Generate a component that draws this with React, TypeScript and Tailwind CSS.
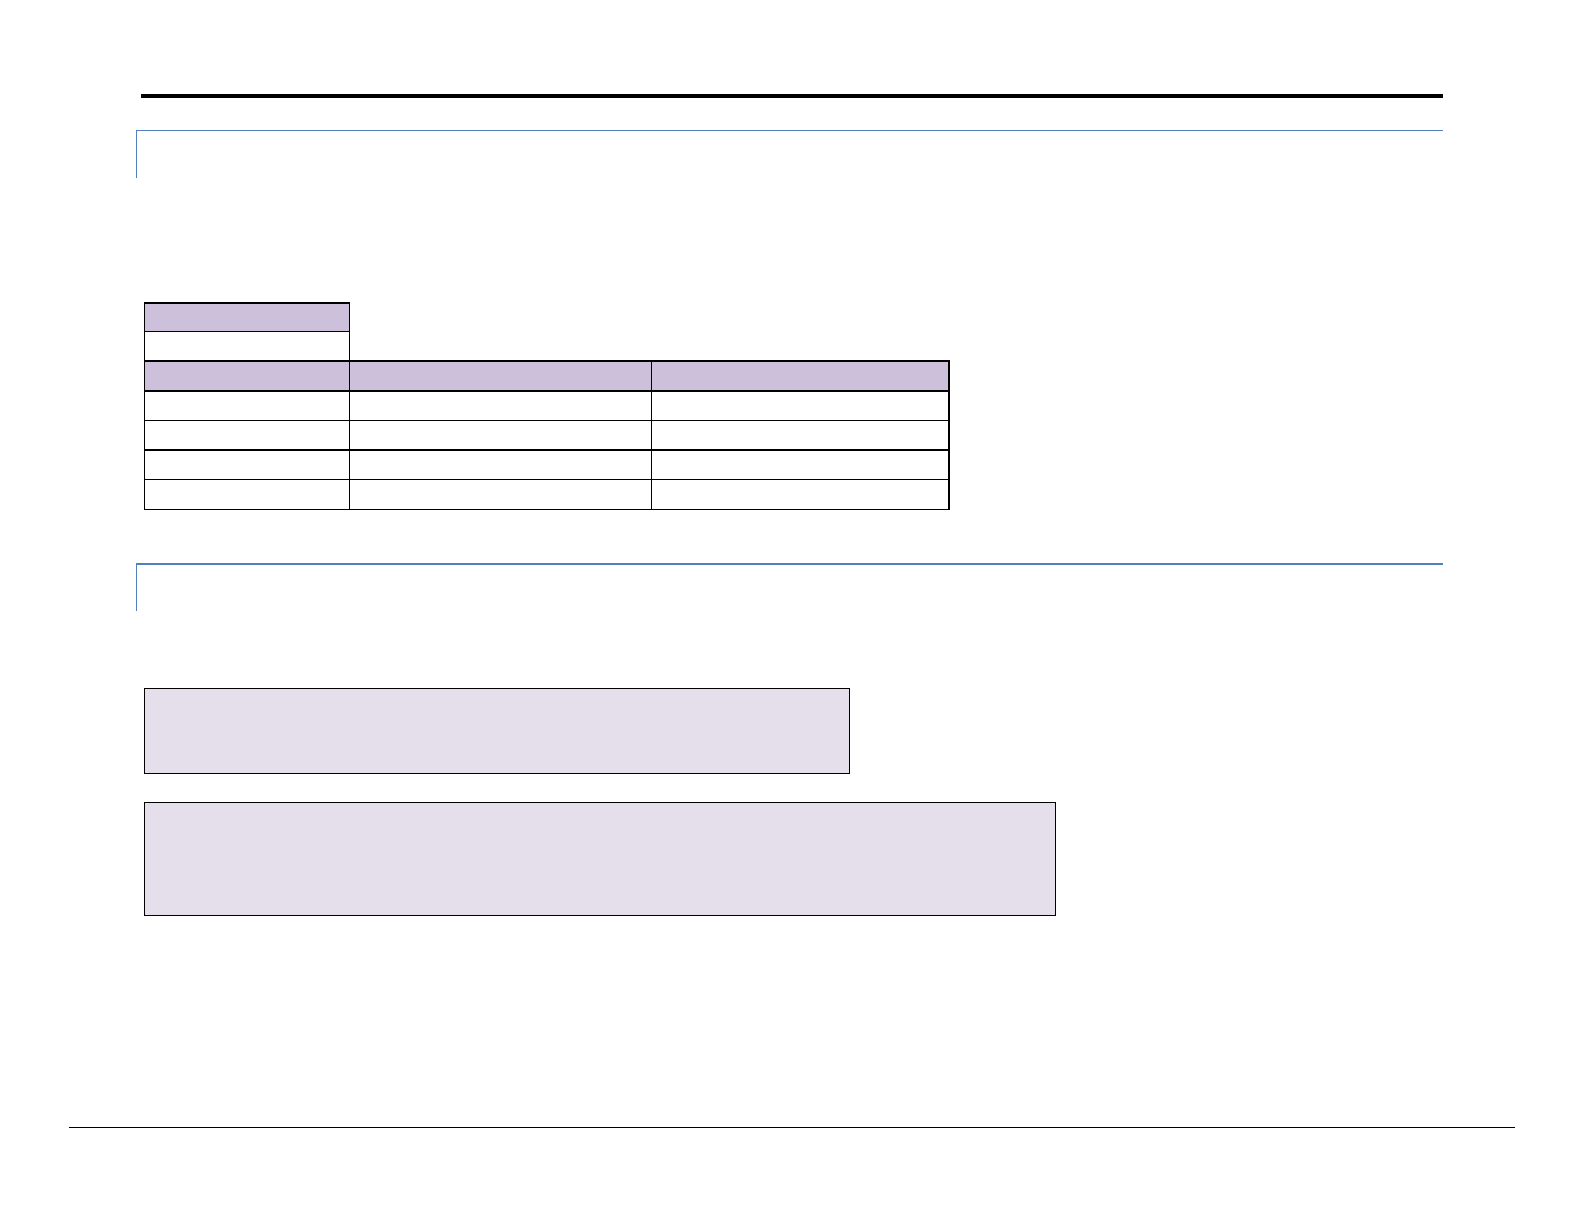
import React from 'react';

const rows = [
    { bg: 'bg-[#ccc0da]', h: 'h-[28px]', border: 'border-b-2' },
    { bg: '', h: 'h-[28px]', border: 'border-b' },
    { bg: '', h: 'h-[28px]', border: 'border-b-2' },
    { bg: '', h: 'h-[28px]', border: 'border-b' },
    { bg: '', h: 'h-[29px]', border: 'border-b' },
];

function SectionHeading({ thick = false }: { thick?: boolean }) {
    return (
        <div
            className={`ml-[136px] h-[48px] w-[1307px] border-l border-[#4f81bd] ${thick ? 'border-t-2' : 'border-t'}`}
        />
    );
}

export default function App() {
    return (
        <div className="flex min-h-[1225px] w-[1585px] flex-col bg-white pt-[94px]">
            {/* top rule */}
            <div className="ml-[141px] h-[4px] w-[1302px] bg-black" />

            <div className="mt-[32px]">
                <SectionHeading />
            </div>

            {/* table */}
            <div className="ml-[144px] mt-[124px] w-[806px]">
                <div className="w-[206px] border-x border-t-2 border-black">
                    <div className="h-[28px] border-b border-black bg-[#ccc0da]" />
                    <div className="h-[28px]" />
                </div>
                <div className="border-l border-r-2 border-t-2 border-black">
                    {rows.map((row, i) => (
                        <div key={i} className={`flex border-black ${row.border} ${row.bg}`}>
                            <div className={`${row.h} w-[205px] border-r border-black`} />
                            <div className={`${row.h} w-[302px] border-r border-black`} />
                            <div className={`${row.h} flex-1`} />
                        </div>
                    ))}
                </div>
            </div>

            <div className="mt-[53px]">
                <SectionHeading thick />
            </div>

            {/* shaded boxes */}
            <div className="ml-[144px] mt-[77px] h-[86px] w-[706px] border border-black bg-[#e5dfec]" />
            <div className="ml-[144px] mt-[28px] h-[114px] w-[912px] border border-black bg-[#e5dfec]" />

            {/* footer rule */}
            <div className="ml-[69px] mt-[211px] h-px w-[1446px] bg-black" />
        </div>
    );
}
